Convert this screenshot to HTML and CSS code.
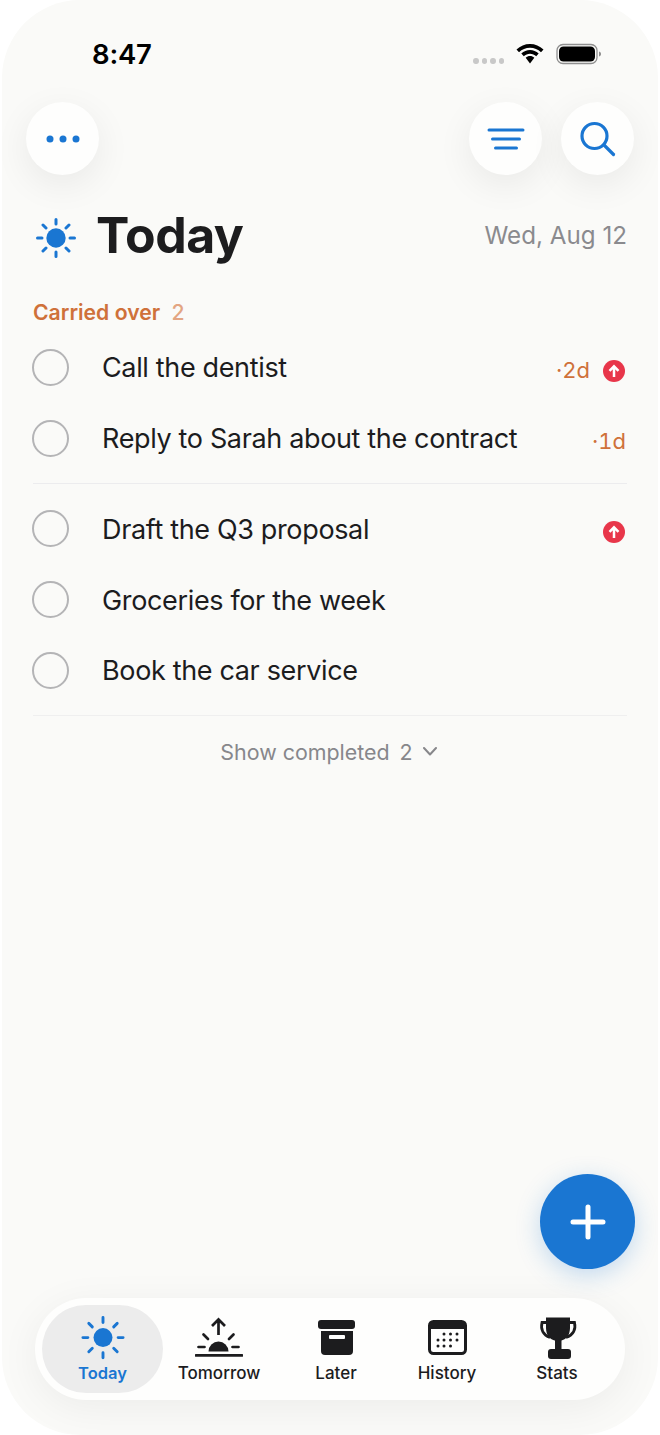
FILE: index.html
```html
<!DOCTYPE html>
<html lang="en">
<head>
<meta charset="utf-8">
<title>Today</title>
<link rel="stylesheet" href="styles.css">
</head>
<body>
<div class="phone">
  <div class="status">
    <span class="time">8:47</span>
    <div class="status-icons">
      <span class="signal"><i></i><i></i><i></i><i></i></span>
      <svg class="wifi" viewBox="0 0 28 22" width="28" height="22"><path d="M14 1C8.800 1 4.300 3 .500 6.600L3 9.300C6 6.300 9.800 4.700 14 4.700S22 6.300 25 9.300L27.500 6.600C23.700 3 19.200 1 14 1Z"/><path d="M14 7C10.700 7 7.800 8.200 5.300 10.600L7.800 13.300C9.500 11.600 11.600 10.700 14 10.700S18.500 11.600 20.200 13.300L22.700 10.600C20.200 8.200 17.300 7 14 7Z"/><path d="M14 13C12.300 13 10.900 13.600 9.700 14.800L14 20.500L18.300 14.800C17.100 13.600 15.700 13 14 13Z"/></svg>
      <svg class="battery" viewBox="0 0 46 22" width="46" height="22"><rect x="1" y="1.500" width="40" height="19" rx="6" fill="none" stroke="#8f8f8f" stroke-width="1.300"/><rect x="3" y="3.500" width="36" height="15" rx="4.500" fill="#000"/><path d="M43 8.500c1.600.5 2 1.500 2 2.500s-.4 2-2 2.500z" fill="#8f8f8f"/></svg>
    </div>
  </div>

  <div class="toolbar">
    <button class="round"><svg viewBox="0 0 36 12" width="36" height="12"><circle cx="5" cy="6" r="3.500"/><circle cx="18" cy="6" r="3.500"/><circle cx="31" cy="6" r="3.500"/></svg></button>
    <div class="toolbar-right">
      <button class="round"><svg viewBox="0 0 38 24" width="38" height="24" class="line-icon thin"><path d="M2 3H36M5.500 12H32.500M8.500 21H29.500"/></svg></button>
      <button class="round"><svg viewBox="0 0 36 38" width="36" height="38" class="line-icon"><circle cx="14.500" cy="16" r="12.500"/><path d="M24.500 25.500L33.500 34.500"/></svg></button>
    </div>
  </div>

  <header class="heading">
    <svg class="sun" viewBox="0 0 40 40" width="40" height="40"><circle cx="20" cy="20" r="9.700" fill="#1a76d2"/><g stroke="#1a76d2" stroke-width="3" stroke-linecap="round"><path d="M20 1.500V6M20 34V38.500M1.500 20H6M34 20H38.500M7 7L10 10M30 30L33 33M7 33L10 30M30 10L33 7"/></g></svg>
    <h1>Today</h1>
    <span class="date">Wed, Aug 12</span>
  </header>

  <div class="section-label">Carried over <span>2</span></div>

  <ul class="tasks carried">
    <li><span class="check"></span><span class="task-text">Call the dentist</span><span class="age">·2d</span><svg class="prio" viewBox="0 0 22 22" width="22" height="22"><circle cx="11" cy="11" r="11" fill="#e8364a"/><path d="M11 17V6.500M6.500 10.800L11 6.300L15.500 10.800" fill="none" stroke="#fff" stroke-width="2.500"/></svg></li>
    <li><span class="check"></span><span class="task-text">Reply to Sarah about the contract</span><span class="age">·1d</span></li>
  </ul>
  <ul class="tasks regular">
    <li><span class="check"></span><span class="task-text">Draft the Q3 proposal</span><svg class="prio" viewBox="0 0 22 22" width="22" height="22"><circle cx="11" cy="11" r="11" fill="#e8364a"/><path d="M11 17V6.500M6.500 10.800L11 6.300L15.500 10.800" fill="none" stroke="#fff" stroke-width="2.500"/></svg></li>
    <li><span class="check"></span><span class="task-text">Groceries for the week</span></li>
    <li><span class="check"></span><span class="task-text">Book the car service</span></li>
  </ul>

  <div class="show-completed">Show completed <span class="count">2</span>
    <svg viewBox="0 0 14 9" width="14" height="9"><path d="M1 1L7 7.500L13 1" fill="none" stroke="#87878b" stroke-width="2" stroke-linecap="round" stroke-linejoin="round"/></svg>
  </div>

  <button class="fab"><svg viewBox="0 0 36 36" width="36" height="36"><path d="M18 3V33M3 18H33" stroke="#fff" stroke-width="5" stroke-linecap="round"/></svg></button>

  <nav class="tabbar">
    <div class="tab active">
      <svg viewBox="0 0 48 44" width="48" height="44"><circle cx="24" cy="21.600" r="9.500" fill="#1a76d2"/><path d="M24 1.500V6.500M24 36.700V41.700M3.900 21.600H8.900M39.100 21.600H44.100M9.800 7.400L13.300 10.900M34.700 32.300L38.200 35.800M9.800 35.800L13.300 32.300M34.700 10.900L38.200 7.400" stroke="#1a76d2" stroke-width="2.900" stroke-linecap="round"/></svg>
      <span>Today</span>
    </div>
    <div class="tab tab-tomorrow">
      <svg viewBox="0 0 48 44" width="48" height="44"><path d="M23.500 19V4M17 10L23.500 3.500L30 10" fill="none" stroke="#1c1c1e" stroke-width="2.700"/><path d="M13.500 35.500a10 10 0 0 1 20 0z" fill="#1c1c1e"/><path d="M8.500 18.500L13 23M38.500 18.500L34 23M3.500 31H9.500M37.500 31H43.500" stroke="#1c1c1e" stroke-width="2.700" stroke-linecap="round"/><path d="M1 39.300H47" stroke="#1c1c1e" stroke-width="2.800" stroke-linecap="round"/></svg>
      <span>Tomorrow</span>
    </div>
    <div class="tab tab-later">
      <svg viewBox="0 0 48 44" width="48" height="44"><rect x="6" y="4" width="37" height="9" rx="3" fill="#1c1c1e"/><path d="M9 15H41V35a4 4 0 0 1-4 4H13a4 4 0 0 1-4-4Z" fill="#1c1c1e"/><rect x="17" y="19" width="16" height="4" rx="1" fill="#fff"/></svg>
      <span>Later</span>
    </div>
    <div class="tab tab-history">
      <svg viewBox="0 0 48 44" width="48" height="44"><rect x="6.500" y="5.500" width="36" height="32" rx="4" fill="#fff" stroke="#1c1c1e" stroke-width="3"/><path d="M6.500 9.500a4 4 0 0 1 4-4h28a4 4 0 0 1 4 4v3.500h-36z" fill="#1c1c1e"/><g fill="#1c1c1e"><circle cx="21" cy="18" r="1.500"/><circle cx="27.500" cy="18" r="1.500"/><circle cx="34" cy="18" r="1.500"/><circle cx="15" cy="24" r="1.500"/><circle cx="21" cy="24" r="1.500"/><circle cx="27.500" cy="24" r="1.500"/><circle cx="34" cy="24" r="1.500"/><circle cx="15" cy="30" r="1.500"/><circle cx="21" cy="30" r="1.500"/><circle cx="27.500" cy="30" r="1.500"/></g></svg>
      <span>History</span>
    </div>
    <div class="tab tab-stats">
      <svg viewBox="0 0 48 44" width="48" height="44"><path d="M13 1.500H37V12C37 20 32 25 25 25S13 20 13 12Z" fill="#1c1c1e"/><path d="M14 6.500H9C7.500 13 10 19 17 21.500M36 6.500H41.500C43 13 40.500 19 33 21.500" fill="none" stroke="#1c1c1e" stroke-width="2.800"/><rect x="22" y="24" width="6.500" height="10" fill="#1c1c1e"/><rect x="15" y="33" width="23" height="10" rx="3" fill="#1c1c1e"/></svg>
      <span>Stats</span>
    </div>
  </nav>
</div>
</body>
</html>
```

FILE: styles.css
```css
* { box-sizing: border-box; }
html, body { margin: 0; padding: 0; background: #fff; }
body { width: 660px; height: 1435px; overflow: hidden; font-family: Inter, "Liberation Sans", sans-serif; }

.phone {
  position: relative;
  width: 656px;
  height: 1435px;
  margin: 0 2px;
  background: #fafaf8;
  border-radius: 78px;
  overflow: hidden;
  display: flex;
  flex-direction: column;
}

.status {
  display: flex;
  justify-content: space-between;
  align-items: center;
  height: 38px;
  margin-top: 35px;
  padding: 0 56px 0 90px;
}
.time { font-size: 27.500px; font-weight: 600; color: #000; letter-spacing: -0.2px; }
.status-icons { display: flex; align-items: center; gap: 12px; }
.signal { display: flex; gap: 3px; margin-top: 14px; }
.signal i { width: 5.500px; height: 6px; border-radius: 50%; background: #c8c8c8; display: block; }
.wifi { fill: #000; }

.toolbar {
  display: flex;
  justify-content: space-between;
  padding: 0 24px 0 24px;
  margin-top: 29px;
}
.toolbar-right { display: flex; gap: 19px; }
.round {
  width: 73px;
  height: 73px;
  border: 0;
  padding: 0;
  border-radius: 50%;
  background: #fefefd;
  box-shadow: 0 10px 36px rgba(0, 0, 0, 0.07);
  display: flex;
  align-items: center;
  justify-content: center;
}
.round svg { fill: #1a76d2; }
.round .line-icon { fill: none; stroke: #1a76d2; stroke-width: 3.200; stroke-linecap: round; }
.round .line-icon.thin { stroke-width: 3; }

.heading {
  display: flex;
  align-items: center;
  padding: 0 31px 0 34px;
  margin-top: 32px;
  height: 60px;
}
.sun { flex: none; margin-top: 2px; }
.heading h1 {
  margin: -4px 0 0 20px;
  font-size: 50px;
  line-height: 60px;
  font-weight: 700;
  color: #1c1c1e;
  letter-spacing: -0.5px;
}
.date { margin: -3px 0 0 auto; font-size: 24.200px; color: #8a8a8e; }

.section-label {
  margin-top: 30px;
  padding-left: 31px;
  font-size: 21.200px;
  line-height: 30px;
  font-weight: 600;
  color: #cf713a;
}
.section-label span { margin-left: 6px; font-weight: 500; color: #e3a582; }

.tasks { list-style: none; margin: 0 31px; padding: 0; }
.carried { margin-top: 5px; padding-bottom: 9px; border-bottom: 1px solid #ececee; }
.regular { margin-top: 10px; padding-bottom: 9px; border-bottom: 1px solid #efefef; }
.tasks li { display: flex; align-items: center; height: 70.750px; }
.check {
  width: 37px;
  height: 37px;
  border: 2.700px solid #b4b4b6;
  border-radius: 50%;
  flex: none;
  margin: 0 33px 0 -1px;
}
.task-text { font-size: 27px; letter-spacing: -0.35px; color: #1c1c1e; margin: 1px auto 0 0; }
.age { font-size: 22px; color: #cf713a; margin: 6px 1px 0 0; font-variant-numeric: tabular-nums; }
.prio { margin: 7px 2px 0 12px; flex: none; }

.show-completed {
  display: flex;
  align-items: center;
  justify-content: center;
  gap: 10px;
  margin-top: 21px;
  padding-right: 3px;
  font-size: 21.400px;
  line-height: 30px;
  color: #87878b;
}

.fab {
  position: absolute;
  left: 538px;
  top: 1174px;
  width: 95px;
  height: 95px;
  padding: 0;
  border: 0;
  border-radius: 50%;
  background: #1a76d2;
  box-shadow: 0 6px 24px rgba(26, 118, 210, 0.25);
  display: flex;
  align-items: center;
  justify-content: center;
}

.tabbar {
  margin: auto 33px 35px;
  height: 102px;
  padding: 7px;
  border-radius: 51px;
  background: #fefefd;
  box-shadow: 0 8px 40px rgba(0, 0, 0, 0.06);
  display: flex;
  align-items: stretch;
}
.tab {
  display: flex;
  flex-direction: column;
  align-items: center;
  justify-content: flex-end;
  padding-bottom: 9px;
  font-size: 17px;
  line-height: 22px;
  font-weight: 500;
  color: #1c1c1e;
}
.tab svg { margin-bottom: 2px; }
.tab-tomorrow { width: 112px; }
.tab-later { width: 122px; }
.tab-history { width: 100px; }
.tab-stats { width: 120px; }
.tab.active {
  width: 121px;
  border-radius: 44px;
  background: #ececec;
  color: #1a76d2;
  font-size: 16.500px;
  font-weight: 600;
}
```
